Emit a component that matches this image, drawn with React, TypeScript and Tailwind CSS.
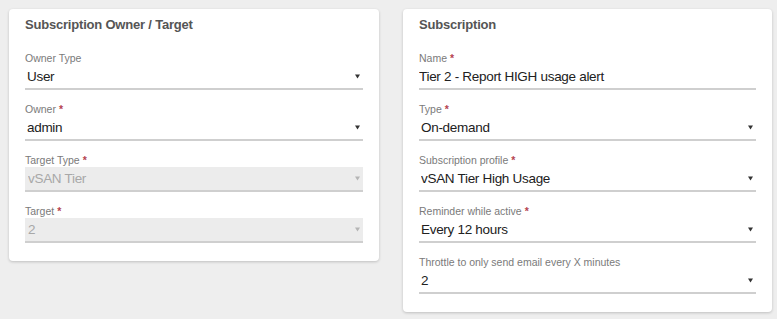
import React from 'react'

interface FieldProps {
  label: string
  value: string
  required?: boolean
  disabled?: boolean
  kind?: 'select' | 'input'
}

function Caret({ disabled }: { disabled?: boolean }) {
  return (
    <svg width="5" height="5" viewBox="0 0 5 5" className="shrink-0">
      <path d="M0 0.5 L5 0.5 L2.5 4.5 Z" fill={disabled ? '#b5b5b5' : '#333333'} />
    </svg>
  )
}

function Field({ label, value, required, disabled, kind = 'select' }: FieldProps) {
  return (
    <div className="flex flex-col">
      <div className="h-[14px] text-[10.5px] leading-[14px] text-[#7a7a7a]">
        {label}
        {required && <span className="ml-[3px] font-bold text-[#b5434f]">*</span>}
      </div>
      <div
        className={`flex h-[25px] items-center border-b-2 border-[#cfcfcf] ${
          disabled ? 'bg-[#ececec] pl-[3px] pr-[3px]' : kind === 'select' ? 'pl-[2px] pr-[3px]' : ''
        }`}
      >
        <span
          className={`flex-1 truncate text-[13.5px] leading-[18px] tracking-[-0.3px] ${
            disabled ? 'text-[#a8a8a8]' : 'text-[#212121]'
          }`}
        >
          {value}
        </span>
        {kind === 'select' && <Caret disabled={disabled} />}
      </div>
    </div>
  )
}

function Card({ title, width, children }: { title: string; width: string; children: React.ReactNode }) {
  return (
    <div
      className={`${width} rounded-[4px] bg-white px-4 pt-[6px] pb-[18px] shadow-[0_1px_3px_rgba(0,0,0,0.2)]`}
    >
      <div className="mb-[16px] h-[20px] text-[13px] font-bold leading-[20px] tracking-[-0.2px] text-[#555555]">
        {title}
      </div>
      <div className="flex flex-col gap-[12px]">{children}</div>
    </div>
  )
}

export default function App() {
  return (
    <div
      className="flex h-[319px] w-[777px] items-start gap-[24px] bg-[#eeeeee] pl-[9px] pt-[9px]"
      style={{ fontFamily: '"Liberation Sans", Arial, sans-serif' }}
    >
      <Card title="Subscription Owner / Target" width="w-[370px]">
        <Field label="Owner Type" value="User" />
        <Field label="Owner" value="admin" required />
        <Field label="Target Type" value="vSAN Tier" required disabled />
        <Field label="Target" value="2" required disabled />
      </Card>
      <Card title="Subscription" width="w-[369px]">
        <Field label="Name" value="Tier 2 - Report HIGH usage alert" required kind="input" />
        <Field label="Type" value="On-demand" required />
        <Field label="Subscription profile" value="vSAN Tier High Usage" required />
        <Field label="Reminder while active" value="Every 12 hours" required />
        <Field label="Throttle to only send email every X minutes" value="2" />
      </Card>
    </div>
  )
}
